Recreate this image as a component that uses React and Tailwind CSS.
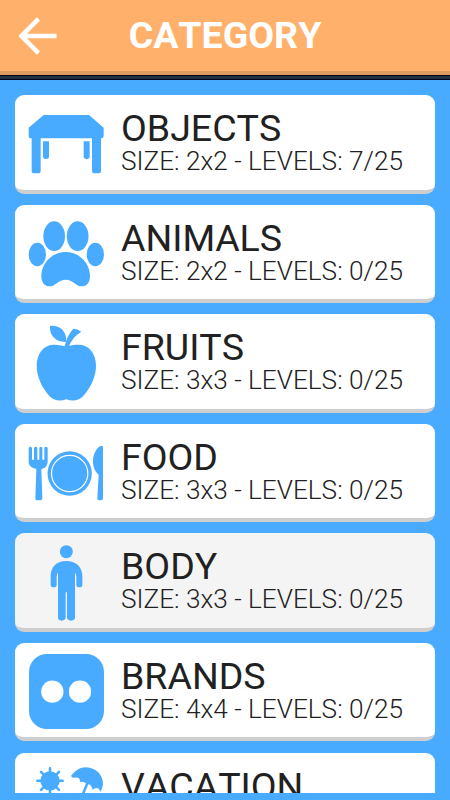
const TableIcon = () => (
  <svg viewBox="57 49 225 225" className="w-[75px] h-[75px] overflow-visible" fill="currentColor">
    <path d="M101 76H237L281 114V139Q281 146 274 146H273V243Q273 251 265 251H254Q246 251 246 243V146H92V243Q92 251 84 251H73Q65 251 65 243V146H64Q56 146 56 139V114Z" />
    <path d="M99 155H117V200Q117 208 109 208H107Q99 208 99 200ZM221 155H239V200Q239 208 231 208H229Q221 208 221 200Z" />
  </svg>
);

const PawIcon = () => (
  <svg viewBox="57 48 225 225" className="w-[75px] h-[75px] overflow-visible" fill="currentColor">
    <ellipse cx="132.500" cy="108.500" rx="32.500" ry="44.500" />
    <ellipse cx="203" cy="108.500" rx="32.500" ry="44.500" />
    <ellipse cx="82" cy="163.500" rx="26" ry="35" />
    <ellipse cx="256" cy="163.500" rx="26" ry="35" />
    <path d="M167 156C207 156 240 189 240 228C240 247 231 259 216 259C198 259 188 239 167 239C146 239 136 259 118 259C103 259 94 247 94 228C94 189 127 156 167 156Z" />
  </svg>
);

const AppleIcon = () => (
  <svg viewBox="57 46.5 225 225" className="w-[75px] h-[75px] overflow-visible" fill="currentColor">
    <path d="M120 49C148 47 171 62 168 97C139 99 117 79 120 49Z" />
    <path d="M164 110C168 91 176 73 190 58Q203 58 214 67C197 77 185 92 177 109C187 107 198 105 209 106C239 108 258 134 258 169C258 202 241 236 222 257C207 274 188 276 169 269C150 276 131 274 116 257C97 236 80 202 80 169C80 134 99 108 129 106C142 105 153 108 164 110Z" />
  </svg>
);

const FoodIcon = () => (
  <svg viewBox="57 45 225 225" className="w-[75px] h-[75px] overflow-visible" fill="currentColor">
    <path d="M56 85Q56 80 61 80Q66 80 66 85V116Q66 120 69 120Q72 120 72 116V85Q72 80 77 80Q82 80 82 85V116Q82 120 85 120Q88 120 88 116V85Q88 80 92 80Q97 80 97 85V116Q97 120 100 120Q103 120 103 116V85Q103 80 108 80Q113 80 113 85V122C113 138 106 144 94 147L97 235Q97 241 91 241H81Q75 241 76 235L79 147C65 144 56 138 56 124Z" />
    <circle cx="179" cy="160.500" r="66.500" />
    <circle cx="179" cy="160.500" r="54.500" fill="none" stroke="white" strokeWidth="3.500" />
    <path d="M279 83V235Q279 241 273 241H267Q261 241 262 235L266 164C256 155 249 142 249 125C249 102 260 84 271 78Q279 75 279 83Z" />
  </svg>
);

const BodyIcon = () => (
  <svg viewBox="57 44 225 225" className="w-[75px] h-[75px] overflow-visible" fill="currentColor">
    <circle cx="169" cy="64" r="19.500" />
    <path d="M169 92C200 92 217 111 217 138V163Q217 171 208 171Q199 171 199 163V139Q199 130 195 127V261Q195 271 183 271Q172 271 171 261V186H167V261Q166 271 155 271Q144 271 144 261V127Q140 130 140 139V163Q140 171 131 171Q122 171 122 163V138C122 111 138 92 169 92Z" />
  </svg>
);

const BrandIcon = () => (
  <svg viewBox="57 43 225 225" className="w-[75px] h-[75px]" fill="currentColor">
    <rect x="57" y="43" width="225" height="225" rx="54" />
    <circle cx="127" cy="156" r="33.500" fill="white" />
    <circle cx="210" cy="156" r="33.500" fill="white" />
  </svg>
);

const VacationIcon = () => (
  <svg viewBox="87 71 225 225" className="w-[75px] h-[75px]" fill="currentColor">
    <circle cx="150" cy="121.500" r="29" />
    <path d="M150 84V160M112 121.500H188M123 94.500L177 148.500M177 94.500L123 148.500" stroke="currentColor" strokeWidth="7.500" strokeLinecap="round" />
    <path d="M213 107C225 91 240 81 258 81C288 82 309 103 309 132Q306 149 300 155Q299 143 290 143Q282 143 278 149Q275 134 265 132L242 188L235 184L258 129Q251 122 240 125Q241 108 223 112Q217 114 213 107Z" />
  </svg>
);

const categories = [
  { name: 'OBJECTS', size: '2x2', levels: '7/25', icon: TableIcon },
  { name: 'ANIMALS', size: '2x2', levels: '0/25', icon: PawIcon },
  { name: 'FRUITS', size: '3x3', levels: '0/25', icon: AppleIcon },
  { name: 'FOOD', size: '3x3', levels: '0/25', icon: FoodIcon },
  { name: 'BODY', size: '3x3', levels: '0/25', icon: BodyIcon, active: true },
  { name: 'BRANDS', size: '4x4', levels: '0/25', icon: BrandIcon },
  { name: 'VACATION', size: '4x4', levels: '0/25', icon: VacationIcon },
];

const CategoryCard = ({ name, size, levels, icon: Icon, active }) => (
  <button
    className={`flex w-full h-[98.5px] shrink-0 items-start rounded-[9px] border-b-4 border-[#cecece] pl-3.5 pt-[11.3px] text-left ${active ? 'bg-[#f4f4f4]' : 'bg-white'}`}
  >
    <span className="text-[#48abff] shrink-0">
      <Icon />
    </span>
    <span className="ml-[17px] mt-[1.7px] flex flex-col whitespace-nowrap text-[#212121]">
      <span className="text-[37.5px] leading-[40px]">{name}</span>
      <span className="text-[26.2px] leading-[27px] font-light">SIZE: {size} - LEVELS: {levels}</span>
    </span>
  </button>
);

const App = () => {
  return (
    <div className="flex h-screen flex-col overflow-hidden bg-[#48abff] font-['Roboto',sans-serif] [font-kerning:none]">
      <header className="flex h-[75px] shrink-0 items-center border-b-4 border-[#de9c60] bg-[#ffb16b] text-white">
        <button className="ml-[19px] w-[38px]" aria-label="Back">
          <svg viewBox="0 0 38 38" className="w-[38px] h-[38px]" fill="none" stroke="currentColor" strokeWidth="4.500">
            <path d="M19.500 1.800L2.500 19L19.500 36.200M2.500 19H37.500" />
          </svg>
        </button>
        <h1 className="flex-1 pr-[57px] text-center text-[37.5px] leading-none font-bold">CATEGORY</h1>
      </header>
      <div className="h-[5px] shrink-0 border-y border-[#020418] bg-[#203044]" />

      <main className="flex min-h-0 flex-1 flex-col gap-[11.1px] overflow-hidden px-[15px] pt-[15px] mb-[7.5px]">
        {categories.map((category) => (
          <CategoryCard key={category.name} {...category} />
        ))}
      </main>
    </div>
  );
};

export default App;
